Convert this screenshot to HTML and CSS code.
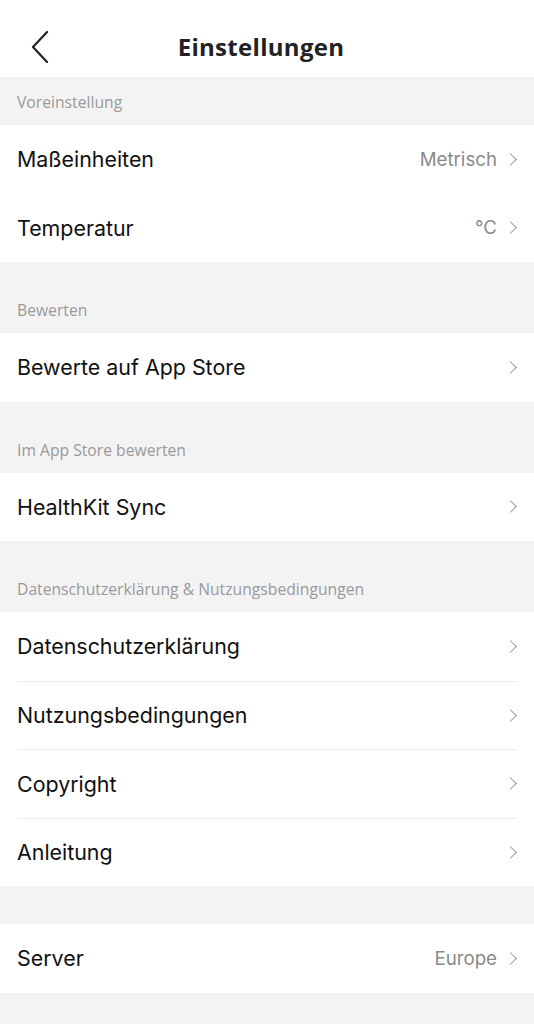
FILE: index.html
```html
<!DOCTYPE html>
<html lang="de">
  <head>
    <meta charset="UTF-8" />
    <meta name="viewport" content="width=device-width, initial-scale=1.0" />
    <title>Einstellungen</title>
    <link rel="stylesheet" href="styles.css">
  </head>
  <body>
    <div class="header">
      <button class="back">
        <svg width="18" height="32" viewBox="0 0 18 32"><path d="M16 1 L2 16 L16 31" fill="none" stroke="#222" stroke-width="2.2" stroke-linecap="round" stroke-linejoin="round"/></svg>
      </button>
      <h1>Einstellungen</h1>
    </div>

    <div class="section first">Voreinstellung</div>
    <div class="group">
      <div class="row"><span class="label">Maßeinheiten</span><span class="value">Metrisch</span><span class="chev"></span></div>
      <div class="row"><span class="label">Temperatur</span><span class="value">°C</span><span class="chev"></span></div>
    </div>

    <div class="section">Bewerten</div>
    <div class="group">
      <div class="row"><span class="label">Bewerte auf App Store</span><span class="chev"></span></div>
    </div>

    <div class="section">Im App Store bewerten</div>
    <div class="group">
      <div class="row"><span class="label">HealthKit Sync</span><span class="chev"></span></div>
    </div>

    <div class="section">Datenschutzerklärung &amp; Nutzungsbedingungen</div>
    <div class="group lined">
      <div class="row"><span class="label">Datenschutzerklärung</span><span class="chev"></span></div>
      <div class="row"><span class="label">Nutzungsbedingungen</span><span class="chev"></span></div>
      <div class="row"><span class="label">Copyright</span><span class="chev"></span></div>
      <div class="row"><span class="label">Anleitung</span><span class="chev"></span></div>
    </div>

    <div class="spacer"></div>
    <div class="group">
      <div class="row"><span class="label">Server</span><span class="value">Europe</span><span class="chev"></span></div>
    </div>
  </body>
</html>
```

FILE: styles.css
```css
body {
  margin: 0;
  font-family: Inter, "Liberation Sans", Arial, sans-serif;
  background: #f3f3f3;
  color: #111;
}
.header {
  background: white;
  height: 77px;
  display: flex;
  align-items: center;
  justify-content: center;
  position: relative;
  padding-right: 12px;
}
.back {
  position: absolute;
  left: 30px;
  top: 31px;
  padding: 0;
  border: none;
  background: none;
  width: 20px;
  height: 32px;
}
.header h1 {
  margin: 0;
  padding-top: 16px;
  font-family: "Open Sans", sans-serif;
  font-weight: 700;
  font-size: 24px;
  letter-spacing: 0.3px;
  color: #222;
}
.section {
  height: 71px;
  box-sizing: border-box;
  padding: 0 17px 12px;
  display: flex;
  align-items: flex-end;
  font-family: "Open Sans", sans-serif;
  font-size: 15.7px;
  color: #9a9a9a;
}
.section.first {
  height: 48px;
}
.spacer {
  height: 38px;
}
.group {
  background: white;
}
.row {
  height: 68.5px;
  display: flex;
  align-items: center;
  padding: 0 16px 0 17px;
  box-sizing: border-box;
}
.label {
  flex: 1;
  font-size: 21.4px;
  color: #111;
}
.value {
  font-size: 18.7px;
  color: #8a8a8a;
  margin-right: 9px;
}
.chev {
  width: 8px;
  height: 8px;
  border-top: 1.6px solid #9a9a9a;
  border-right: 1.6px solid #9a9a9a;
  transform: rotate(45deg);
  margin-right: 3px;
}
.group.lined .row + .row {
  border-top: 1px solid #ececec;
  margin: 0 17px;
  padding: 0;
}
.group.lined .row + .row .chev {
  margin-right: 2px;
}
```
